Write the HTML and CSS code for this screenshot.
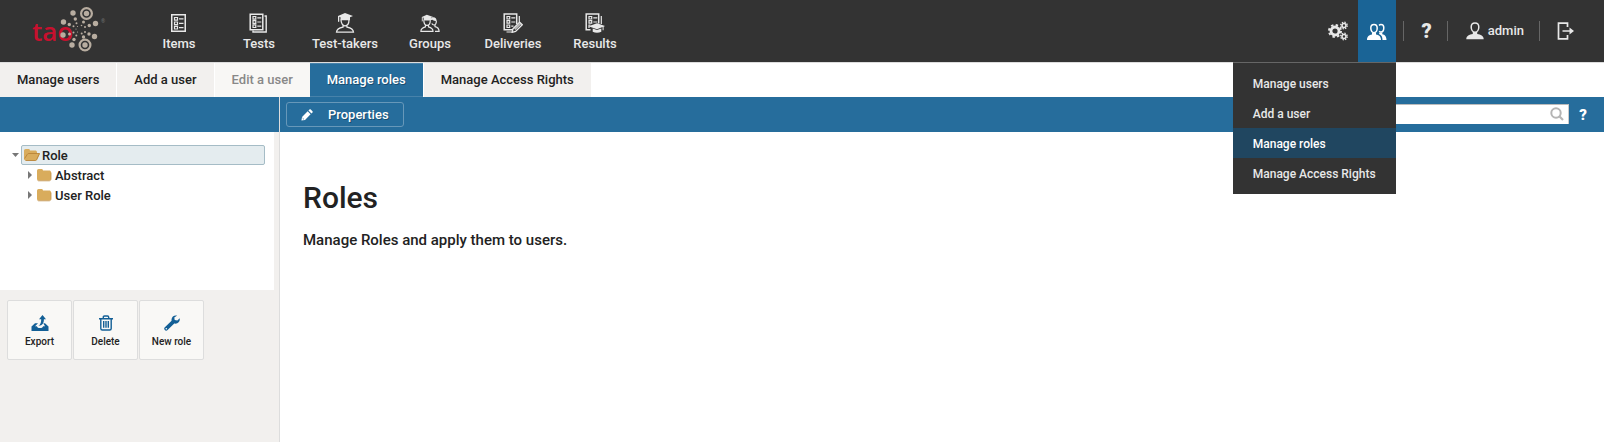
FILE: index.html
```html
<!DOCTYPE html>
<html lang="en">
<head>
<meta charset="utf-8">
<title>TAO - Manage roles</title>
<link rel="stylesheet" href="styles.css">
</head>
<body>
<svg class="sprite" aria-hidden="true">
  <defs>
    <symbol id="sheet" viewBox="0 0 20 20">
      <g fill="none" stroke="currentColor">
        <path d="M2.75 1.75h13.5v16.5H2.75z" stroke-width="1.5"/>
        <path d="M5.5 4.5h3v2.6h-3zM5.5 9h3v2.6h-3zM5.5 13.4h3v2.6h-3zM10 5.8h4.5M10 10.3h4.500M10 14.700h4.500" stroke-width="1.2"/>
      </g>
    </symbol>
    <symbol id="sheets" viewBox="0 0 20 20">
      <g fill="none" stroke="currentColor">
        <path d="M1.2 1.200h12.600v15.600H1.200z" stroke-width="1.500"/>
        <path d="M4 3.500h2.800v2.600H4zM4 7.700h2.800v2.600H4zM4 11.900h2.800v2.600H4zM8.300 4.800h4M8.300 9h4M8.300 13.200h4" stroke-width="1.200"/>
        <path d="M15.500 3h1.700v16H4v-1.500" fill="none" stroke-width="1.400"/>
      </g>
    </symbol>
    <symbol id="taker" viewBox="0 0 20 20">
      <path d="M10 0l8 3-3 1.200v3H5.500v-3l-1.200-.4v4.700l-1.300.4V3z" fill="currentColor"/>
      <path d="M6 6.500c0 4 1.800 6.300 4 6.300s4-2.300 4-6.300M8 12v2.200c-3 .6-6.300 1.600-6.500 5h17c-.2-3.400-3.500-4.400-6.500-5V12" fill="none" stroke="currentColor" stroke-width="1.300"/>
    </symbol>
    <symbol id="group" viewBox="0 0 22 20">
      <path d="M7.500 1l7 2.300-2.500 1v3H4v-3l-1-.3v4l-1 .4V3.300zM11.500 7c.2-2.500 1.500-3.300 3.200-3.300 2.300 0 3.500 1.300 3.500 4-2.500.3-3.500-.2-4.500-1.200z" fill="currentColor"/>
      <path d="M4.200 7c0 3.800 1.500 5.700 3.500 5.700S11.300 10.800 11.300 7M6 12.300v2C3.300 15 1 16 1 19.200h13.300c0-3.200-2.300-4.200-5-4.900v-2M18 7.500c0 3-1 4.700-2.700 4.700-1 0-1.800-.6-2.300-1.600M16.500 12v2c2.600.6 4.500 1.800 4.500 5.200h-4.500" fill="none" stroke="currentColor" stroke-width="1.300"/>
    </symbol>
    <symbol id="delivery" viewBox="0 0 20 20">
      <g fill="none" stroke="currentColor">
        <path d="M10 16.800H1.200V1h12.500v10" stroke-width="1.500"/>
        <path d="M4 3.500h2.700v2.500H4zM4 7.700h2.700v2.500H4zM4 12h2.700v2.500H4zM8.300 4.800h4M8.300 9h4M8.300 13.200h2.200M16.300 3v6M3.500 19h6" stroke-width="1.200"/>
        <path d="M10 15.700l6.600-6.600 2.700 2.600-6.700 6.700-3.400.9z" stroke-width="1.300"/>
      </g>
      <path d="M11 15.500l6-6 1.500 1.500-6 6z" fill="currentColor" opacity=".75"/>
    </symbol>
    <symbol id="result" viewBox="0 0 20 20">
      <g fill="none" stroke="currentColor">
        <path d="M5.500 16.800H1.200V1h12.500v9.500" stroke-width="1.500"/>
        <path d="M4 3.500h2.700v2.500H4zM4 7.700h2.700v2.500H4zM8.300 4.800h4M8.300 9h4M4 15v-3h1.500M16.300 3v8" stroke-width="1.200"/>
      </g>
      <path d="M12 10.300l8 2.800-1.400.6v3.500h-1v-3.100L12 16.200l-8.500-3z" fill="currentColor"/>
      <path d="M7.700 15.500v3.300c2.700 1.300 5.900 1.300 8.600 0v-3.300L12 17z" fill="currentColor"/>
    </symbol>
    <symbol id="gears" viewBox="0 0 20 20">
      <g fill="none" stroke="currentColor">
        <circle cx="7" cy="10" r="4" stroke-width="2.800"/>
        <circle cx="7" cy="10" r="6" stroke-width="2" stroke-dasharray="2.400 2.310"/>
        <circle cx="16" cy="4.500" r="2" stroke-width="1.600"/>
        <circle cx="16" cy="4.500" r="3.300" stroke-width="1.300" stroke-dasharray="1.400 1.190"/>
        <circle cx="16" cy="15.500" r="2" stroke-width="1.600"/>
        <circle cx="16" cy="15.500" r="3.300" stroke-width="1.300" stroke-dasharray="1.400 1.190"/>
      </g>
    </symbol>
    <symbol id="users" viewBox="0 0 20 18">
      <path d="M7 1.600c2.100 0 3.200 1.400 3.200 3.500 0 2.400-1.300 4.600-3.200 4.600S3.800 7.500 3.800 5.100c0-2.100 1.100-3.500 3.200-3.500zM12 2.300c.6-.5 1.200-.7 2-.7 1.900 0 2.800 1.300 2.800 3.200 0 2.200-1.100 4.200-2.800 4.200-.7 0-1.300-.3-1.800-.8" fill="none" stroke="currentColor" stroke-width="1.500"/>
      <path d="M5 10h4v1.500c2.800.6 5 1.800 5 5.500H0c0-3.700 2.200-4.900 5-5.500zM12.500 9.500h2.800v1.700c2.500.6 4.200 2 4.200 5.800h-4c0-3-.8-4.700-3.500-5.900z" fill="currentColor"/>
    </symbol>
    <symbol id="user" viewBox="0 0 18 18">
      <path d="M9 1c2.600 0 3.800 1.600 3.800 4 0 2.700-1.500 5.200-3.800 5.200S5.200 7.700 5.200 5C5.200 2.600 6.400 1 9 1z" fill="none" stroke="currentColor" stroke-width="1.500"/>
      <path d="M6.800 10h4.400v2c3.400.7 6.500 1.700 6.500 5.300H.3c0-3.600 3.100-4.600 6.500-5.300z" fill="currentColor"/>
    </symbol>
    <symbol id="logout" viewBox="0 0 18 18">
      <path d="M10.500 5V1.200h-9v15.600h9V13M5.500 9h10" fill="none" stroke="currentColor" stroke-width="1.700"/>
      <path d="M12.500 5.500L17 9l-4.500 3.500z" fill="currentColor"/>
    </symbol>
    <symbol id="pencil" viewBox="0 0 14 14">
      <path d="M1.200 9.200l6.600-6.500 3.400 3.400-6.500 6.600-4.200.8zM8.700 1.800l1.200-1.200c.5-.5 1-.5 1.500 0l2 2c.5.500.5 1 0 1.500l-1.200 1.200z" fill="currentColor"/>
      <path d="M1.800 10.500l1.700 1.700" stroke="#266d9c" stroke-width=".8"/>
    </symbol>
    <symbol id="search" viewBox="0 0 14 14">
      <circle cx="6" cy="6" r="4.700" fill="none" stroke="currentColor" stroke-width="2"/>
      <path d="M9.300 9.300l3.700 3.700" stroke="currentColor" stroke-width="2.200"/>
    </symbol>
    <symbol id="folder" viewBox="0 0 16 14">
      <path d="M1 3c0-1.200.6-2 1.700-2h2.600C6.500 1 7 1.600 7 2.500h6.200c1 0 1.800.7 1.800 1.700v6.600c0 1-.8 1.700-1.800 1.700H2.800C1.700 12.500 1 11.800 1 10.800z" fill="#d9ac5c"/>
      <path d="M1.500 12.300c.4.400.8.500 1.300.5h10.400c1.100 0 1.800-.8 1.800-2V4.500" fill="none" stroke="#bf8f49" stroke-width=".8"/>
    </symbol>
    <symbol id="folder-open" viewBox="0 0 16 14">
      <path d="M0 2.800C0 1.700.7 1 1.700 1h2.600C5.500 1 6 1.600 6 2.500h5.200c1 0 1.800.7 1.800 1.700v1.300h3l-2.700 5.700c-.4.900-.8 1.300-1.800 1.300H1.800C.7 12.500 0 11.800 0 10.800z" fill="#d9ac5c"/>
      <path d="M.6 10.500l2.600-4c.4-.7.8-1 1.600-1h10.700l-2.700 5.800c-.3.800-.8 1.200-1.500 1.200H1.500" fill="none" stroke="#b98338" stroke-width=".9"/>
    </symbol>
    <symbol id="export" viewBox="0 0 18 16">
      <path d="M11.500 0l3.500 4.300h-2.100c0 3.700-1.100 6-5.400 6.700 2-1.700 2.700-3.500 2.700-6.700H8z" fill="currentColor"/>
      <path d="M.5 11.500L4 8.300h3L4 11.200h1.800c.6 1.300 1.500 1.800 3.200 1.800s2.600-.500 3.200-1.800H14l-1.700-2.900H14l3.500 3.200V16H.5z" fill="currentColor"/>
    </symbol>
    <symbol id="trash" viewBox="0 0 14 16">
      <path d="M0 3.700h14M4.300 3.500V2.200c0-.800.4-1.200 1.200-1.200h3c.8 0 1.200.4 1.200 1.200v1.300M1.800 4v9.500c0 1 .5 1.500 1.500 1.500h7.400c1 0 1.500-.5 1.500-1.500V4M4.700 6v6.800M7 6v6.800M9.300 6v6.800" fill="none" stroke="currentColor" stroke-width="1.400"/>
    </symbol>
    <symbol id="wrench" viewBox="0 0 16 16">
      <path d="M13.200.6C10.500-.3 6.800 1.700 7.600 5.800L.6 12.500c-1.400 1.500 1 4.200 2.700 2.800l7-6.800c3.700.8 6-2.200 5.400-5.300l-2.400 2.300-2.600-.6-.4-2.300z" fill="currentColor"/>
      <circle cx="2.300" cy="13.700" r=".8" fill="#f9f8f6"/>
    </symbol>
  </defs>
</svg>

<header class="header">
  <a class="logo" href="#" aria-label="TAO home">
    <svg width="76" height="48" viewBox="0 0 76 48">
      <text class="logo-word" x="0" y="36">tao</text>
      <text class="logo-mark" x="69" y="18">®</text>
      <g fill="#b8ada0">
        <circle cx="54.500" cy="8.500" r="2.700"/><circle cx="53" cy="40" r="2.700"/>
        <circle cx="41" cy="8" r="2.700"/><circle cx="31.500" cy="17" r="2.700"/>
        <circle cx="63.500" cy="18.500" r="2.700"/><circle cx="62.500" cy="31.500" r="2.700"/>
        <circle cx="40" cy="40" r="2.700"/><circle cx="31" cy="30" r="2.700"/>
        <circle cx="43.300" cy="14" r="1.700"/><circle cx="37.300" cy="19.500" r="1.700"/>
        <circle cx="57.300" cy="20.500" r="1.700"/><circle cx="57" cy="29" r="1.700"/>
        <circle cx="42" cy="34.500" r="1.700"/><circle cx="51.500" cy="32" r="1.700"/>
        <circle cx="37.500" cy="29" r="1.500"/><circle cx="51.500" cy="17" r="1.500"/>
        <circle cx="44.500" cy="18.300" r="1"/><circle cx="41.500" cy="21.300" r="1"/>
        <circle cx="53" cy="22" r="1"/><circle cx="53" cy="27" r="1"/>
        <circle cx="44.300" cy="30.500" r="1"/><circle cx="49.700" cy="28.500" r="1"/>
        <circle cx="41.500" cy="27.500" r="1"/><circle cx="49.500" cy="20.500" r=".8"/>
        <circle cx="45.500" cy="21.500" r=".6"/><circle cx="44" cy="24" r=".6"/>
        <circle cx="45.500" cy="27" r=".6"/>
      </g>
      <g fill="none" stroke="#b8ada0" stroke-width="2.200">
        <circle cx="54.500" cy="8.500" r="5.400"/><circle cx="53" cy="40" r="5.400"/>
      </g>
    </svg>
  </a>
  <nav class="main-nav">
    <a href="#"><svg class="icon-main"><use href="#sheet"/></svg>Items</a>
    <a href="#"><svg class="icon-main"><use href="#sheets"/></svg>Tests</a>
    <a href="#"><svg class="icon-main"><use href="#taker"/></svg>Test-takers</a>
    <a href="#"><svg class="icon-main"><use href="#group"/></svg>Groups</a>
    <a href="#"><svg class="icon-main"><use href="#delivery"/></svg>Deliveries</a>
    <a href="#"><svg class="icon-main"><use href="#result"/></svg>Results</a>
  </nav>
  <nav class="settings">
    <a class="set-gears" href="#" aria-label="Settings"><svg width="20" height="20"><use href="#gears"/></svg></a>
    <div class="set-users">
      <a class="set-current" href="#" aria-label="Users"><svg width="20" height="18"><use href="#users"/></svg></a>
      <ul class="menu">
        <li><a href="#">Manage users</a></li>
        <li><a href="#">Add a user</a></li>
        <li><a class="menu-active" href="#">Manage roles</a></li>
        <li><a href="#">Manage Access Rights</a></li>
      </ul>
    </div>
    <a class="set-item set-help" href="#">?</a>
    <a class="set-item set-admin" href="#"><svg width="18" height="18"><use href="#user"/></svg>admin</a>
    <a class="set-item set-logout" href="#" aria-label="Log out"><svg width="18" height="18"><use href="#logout"/></svg></a>
  </nav>
</header>

<nav class="tabs">
  <a class="tab" href="#">Manage users</a>
  <a class="tab" href="#">Add a user</a>
  <a class="tab tab-disabled" href="#">Edit a user</a>
  <a class="tab tab-active" href="#">Manage roles</a>
  <a class="tab" href="#">Manage Access Rights</a>
</nav>

<div class="workspace">
  <aside class="sidebar">
    <div class="bar"></div>
    <ul class="tree">
      <li>
        <div class="node"><span class="arrow-open"></span><a class="node-label node-selected" href="#"><svg class="folder"><use href="#folder-open"/></svg>Role</a></div>
        <ul class="branch">
          <li class="node"><span class="arrow"></span><a class="node-label" href="#"><svg class="folder"><use href="#folder"/></svg>Abstract</a></li>
          <li class="node"><span class="arrow"></span><a class="node-label" href="#"><svg class="folder"><use href="#folder"/></svg>User Role</a></li>
        </ul>
      </li>
    </ul>
    <div class="actions">
      <button class="action" type="button"><svg width="18" height="16"><use href="#export"/></svg>Export</button>
      <button class="action" type="button"><svg width="18" height="16"><use href="#trash"/></svg>Delete</button>
      <button class="action" type="button"><svg width="18" height="16"><use href="#wrench"/></svg>New role</button>
    </div>
  </aside>
  <main class="content">
    <div class="bar content-bar">
      <button class="properties" type="button"><svg width="12" height="12"><use href="#pencil"/></svg>Properties</button>
      <form class="search">
        <div class="search-box">
          <input class="search-input" type="text" aria-label="Search">
          <button class="search-button" type="button" aria-label="Search"><svg width="14" height="14"><use href="#search"/></svg></button>
        </div>
        <button class="search-help" type="button">?</button>
      </form>
    </div>
    <section class="intro">
      <h1>Roles</h1>
      <p>Manage Roles and apply them to users.</p>
    </section>
  </main>
</div>
</body>
</html>
```
FILE: styles.css
```css
* { box-sizing: border-box; }
body {
  margin: 0;
  min-height: 100vh;
  display: flex;
  flex-direction: column;
  background: #fff;
  color: #222;
  font: 500 13px/20px Roboto, "Liberation Sans", sans-serif;
}
a { color: inherit; text-decoration: none; }
ul { margin: 0; padding: 0; list-style: none; }
button { margin: 0; padding: 0; border: 0; background: none; color: inherit; font: inherit; }
svg { display: block; flex: none; }
.sprite { position: absolute; width: 0; height: 0; }

.header {
  display: flex;
  height: 63px;
  background: #333;
  border-bottom: 1px solid #ddd;
  color: #e8e8e8;
}
.logo { width: 107px; margin-right: 32px; padding: 5px 0 0 32px; }
.logo-word { font: 600 26px "Open Sans", sans-serif; fill: #c8102e; }
.logo-mark { font: 5px "Open Sans", sans-serif; fill: #777; }

.main-nav { display: grid; grid-template-columns: 80px 80px 92px 78px 88px 76px; }
.main-nav a { display: flex; flex-direction: column; align-items: center; gap: 1px; padding-top: 13px; }
.icon-main { width: 20px; height: 20px; }

.settings { display: flex; align-items: stretch; margin-left: auto; }
.settings > a, .set-current { display: flex; align-items: center; justify-content: center; }
.set-gears { padding: 0 10px; }
.set-users { position: relative; width: 38px; display: flex; }
.set-current { flex: 1; height: 62px; padding-top: 2px; background: #1a6496; color: #fff; }
.set-item::before {
  content: "";
  align-self: center;
  width: 1px;
  height: 20px;
  background: #666;
}
.set-help { font-size: 20px; font-weight: 900; gap: 18px; padding: 0 15px 0 7px; }
.set-admin { gap: 4px; padding-right: 15px; }
.set-admin svg { margin-left: 14px; }
.set-logout { gap: 17px; padding-right: 29px; }
.menu {
  position: absolute;
  z-index: 2;
  top: 62px;
  right: 0;
  padding: 5px 0 6px;
  border-top: 1px solid #666;
  background: #333;
  font-size: 12px;
  white-space: nowrap;
}
.menu a { display: block; padding: 6px 20px 4px; }
.menu .menu-active { background: #204660; color: #fff; }

.tabs { display: flex; gap: 1px; height: 34px; }
.tab { padding: 7px 17px; background: #f2f0ee; }
.tab-disabled { background: #f8f7f5; color: #888; margin-right: -1px; }
.tab-active {
  background: #266d9c;
  border: solid #4782aa;
  border-width: 1px 0;
  padding-top: 6px;
  color: #fff;
  text-shadow: 1px 1px #1a4d70;
}

.workspace { display: flex; flex: 1; }
.bar { height: 35px; background: #266d9c; }
.sidebar { width: 280px; background: #f2f0ee; border-right: 1px solid #ddd; }
.tree { height: 158px; margin-right: 5px; padding: 13px 9px 0 12px; background: #fff; }
.node { display: flex; align-items: center; }
.arrow-open { width: 7px; height: 4px; margin-right: 2px; background: #777; clip-path: polygon(0 0, 100% 0, 50% 100%); }
.arrow { width: 4px; height: 8px; margin-right: 4px; background: #777; clip-path: polygon(0 0, 100% 50%, 0 100%); }
.branch { padding-left: 16px; }
.node-label { display: flex; flex: 1; align-items: center; gap: 3px; padding-top: 2px; line-height: 18px; }
.node-selected { gap: 2px; padding-left: 2px; border: 1px solid #a5bcc6; border-radius: 2px; background: #e4ecef; line-height: 16px; }
.folder { width: 16px; height: 14px; margin-bottom: 2px; }
.actions { display: flex; gap: 1px; padding: 10px 7px; }
.action {
  display: flex;
  flex-direction: column;
  align-items: center;
  justify-content: center;
  gap: 3px;
  width: 65px;
  height: 60px;
  padding-top: 5px;
  border: 1px solid #ddd;
  border-radius: 2px;
  background: #f9f8f6;
  font-size: 10px;
  line-height: 16px;
}
.action svg { color: #135f96; }

.content { flex: 1; }
.content-bar { display: flex; align-items: center; justify-content: space-between; padding: 0 17px 0 6px; color: #fff; }
.properties {
  display: flex;
  align-items: center;
  gap: 15px;
  height: 25px;
  padding: 1px 14px 0;
  border: 1px solid #6798b9;
  border-radius: 3px;
  text-shadow: 1px 1px #1a4d70;
}
.search { display: flex; align-items: center; gap: 10px; }
.search-box { display: flex; align-items: center; width: 220px; height: 20px; margin-bottom: 2px; padding-right: 4px; background: #fff; border-top: 1px solid #bbb; border-right: 1px solid #ccc; }
.search-input { flex: 1; min-width: 0; border: 0; outline: 0; background: none; font: inherit; }
.search-button { color: #b5b5b5; }
.search-help { font-size: 15px; font-weight: 900; }
.intro { padding: 46px 23px; }
h1 { margin: 0; font-size: 30px; font-weight: 500; line-height: 40px; }
p { margin: 12px 0 0; font-size: 15px; }
```
